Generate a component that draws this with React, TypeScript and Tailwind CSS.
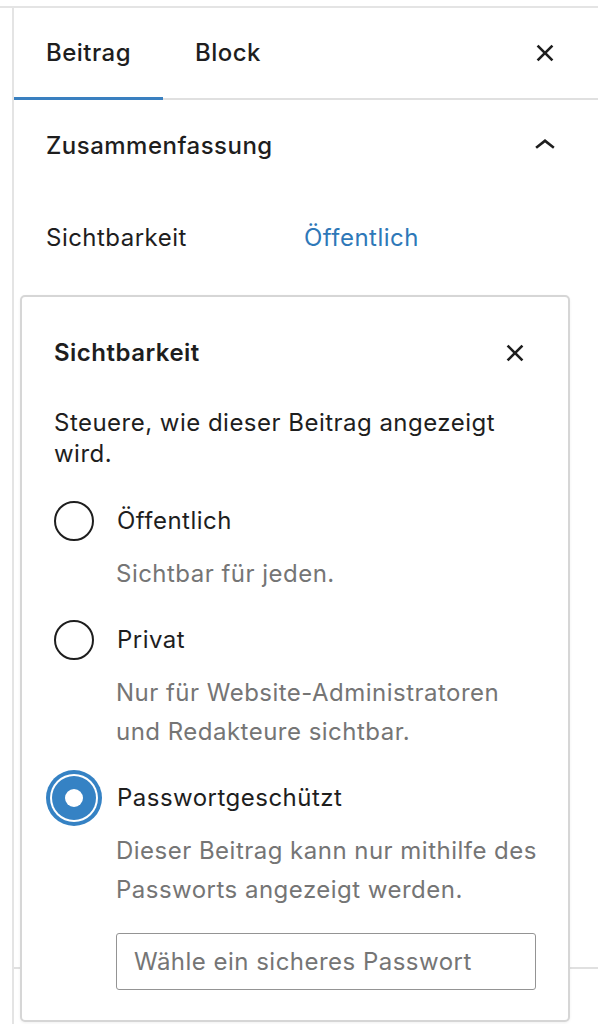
import React from "react";

const CloseIcon = ({ size = 42 }: { size?: number }) => (
  <svg width={size} height={size} viewBox="0 0 24 24" fill="#1e1e1e">
    <path d="M12 13.06l3.712 3.713 1.061-1.06L13.061 12l3.712-3.712-1.06-1.06L12 10.938 8.288 7.227l-1.061 1.06L10.939 12l-3.712 3.712 1.06 1.061L12 13.061z" />
  </svg>
);

const ChevronUp = ({ size = 42 }: { size?: number }) => (
  <svg width={size} height={size} viewBox="0 0 24 24" fill="#1e1e1e">
    <path d="M6.5 12.4L12 8l5.5 4.4-.9 1.2L12 10l-4.6 3.6-1-1.2z" />
  </svg>
);

const Radio = ({ checked }: { checked?: boolean }) =>
  checked ? (
    <div className="w-[40px] h-[40px] shrink-0 flex items-center justify-center">
      <div className="w-[44px] h-[44px] shrink-0 rounded-full bg-[#3582c4] shadow-[0_0_0_2px_#ffffff,0_0_0_6px_#3582c4] flex items-center justify-center">
        <div className="w-[18px] h-[18px] rounded-full bg-white" />
      </div>
    </div>
  ) : (
    <div className="w-[40px] h-[40px] shrink-0 rounded-full border-2 border-[#1e1e1e]" />
  );

export default function App() {
  return (
    <div
      className="w-[598px] h-[1024px] bg-white relative overflow-hidden text-[#1e1e1e] text-[24px] tracking-[0.02em]"
      style={{ fontFamily: "Inter, 'Noto Sans', sans-serif" }}
    >
      <div className="pt-[6px]">
        <div className="border-t-2 border-[#e4e4e4]">
          <div className="ml-[12px] border-l-2 border-[#e4e4e4] h-[1020px]">
            {/* Tabs */}
            <div className="h-[92px] border-b-2 border-[#e0e0e0] flex items-stretch pr-[32px]">
              <div className="w-[149px] relative flex items-center justify-center font-medium">
                Beitrag
                <div className="absolute left-0 right-0 bottom-[-2px] h-[3px] bg-[#3a80c0]" />
              </div>
              <div className="w-[131px] flex items-center pl-[32px] font-medium">Block</div>
              <div className="flex-1" />
              <div className="flex items-center">
                <CloseIcon />
              </div>
            </div>
            {/* Summary section */}
            <div className="h-[869px] border-b-2 border-[#e0e0e0] pl-[32px] pr-[32px]">
              <div className="h-[92px] flex items-center justify-between">
                <span className="font-medium">Zusammenfassung</span>
                <ChevronUp />
              </div>
              <div className="mt-[26px] h-[40px] flex items-center">
                <span className="w-[258px]">Sichtbarkeit</span>
                <span className="text-[#2e78b8]">Öffentlich</span>
              </div>
            </div>
          </div>
        </div>
      </div>

      {/* Popover */}
      <div className="absolute left-[20px] top-[295px] w-[550px] h-[727px] bg-white border-2 border-[#d6d6d6] rounded-[5px] shadow-[0_1px_3px_rgba(0,0,0,0.06)] px-[32px] pt-[40px]">
        <div className="h-[31px] flex items-center justify-between">
          <span className="font-semibold leading-[31px]">Sichtbarkeit</span>
          <CloseIcon />
        </div>
        <p className="mt-[39px] leading-[31px]">Steuere, wie dieser Beitrag angezeigt wird.</p>

        <div className="mt-[32px] flex items-center gap-[23px] h-[40px]">
          <Radio />
          <span>Öffentlich</span>
        </div>
        <p className="mt-[13px] pl-[62px] mr-[-5px] leading-[39px] text-[#757575]">Sichtbar für jeden.</p>

        <div className="mt-[27px] flex items-center gap-[23px] h-[40px]">
          <Radio />
          <span>Privat</span>
        </div>
        <p className="mt-[13px] pl-[62px] mr-[-5px] leading-[39px] text-[#757575]">
          Nur für Website-Administratoren und Redakteure sichtbar.
        </p>

        <div className="mt-[27px] flex items-center gap-[23px] h-[40px]">
          <Radio checked />
          <span>Passwortgeschützt</span>
        </div>
        <p className="mt-[13px] pl-[62px] mr-[-5px] leading-[39px] text-[#757575]">
          Dieser Beitrag kann nur mithilfe des Passworts angezeigt werden.
        </p>

        <div className="mt-[24px] ml-[62px] h-[57px] border-[1.5px] border-[#949494] rounded-[3px] flex items-center pl-[17px] text-[#757575]">
          Wähle ein sicheres Passwort
        </div>
      </div>
    </div>
  );
}
